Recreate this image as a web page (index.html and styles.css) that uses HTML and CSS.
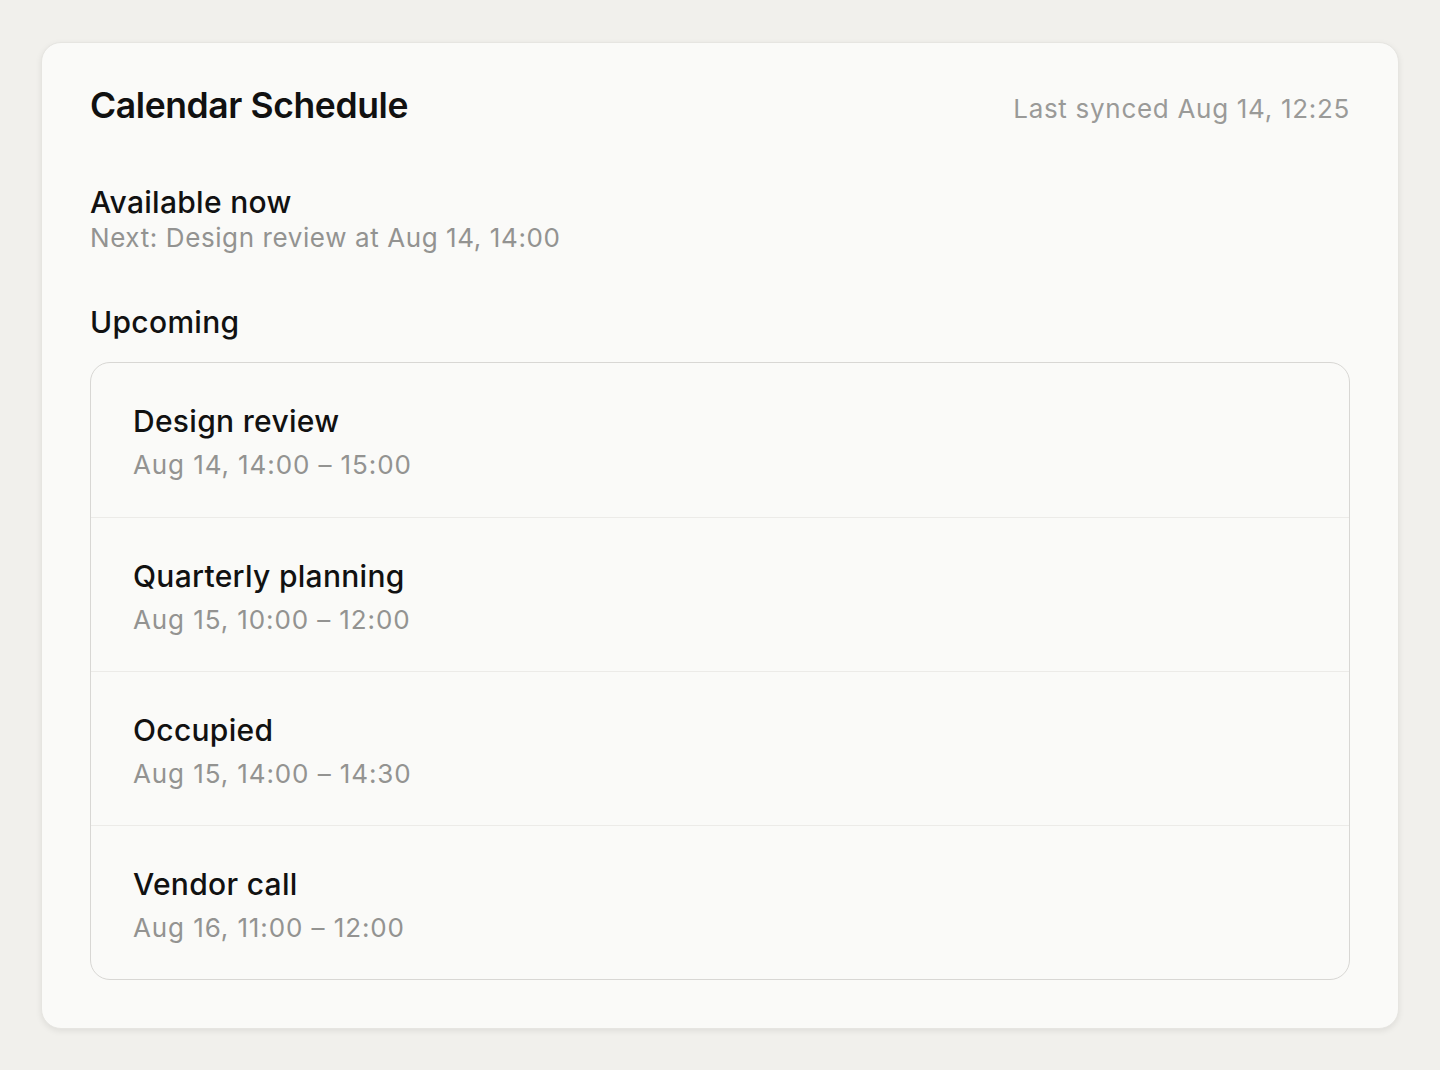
FILE: index.html
```html
<!DOCTYPE html>
<html lang="en">
  <head>
    <meta charset="UTF-8" />
    <title>Calendar Schedule</title>
    <link rel="stylesheet" href="styles.css">
  </head>
  <body>
    <main class="card">
      <header class="card-header">
        <h1>Calendar Schedule</h1>
        <span class="synced">Last synced Aug 14, 12:25</span>
      </header>

      <section class="status">
        <h2>Available now</h2>
        <p class="muted">Next: Design review at Aug 14, 14:00</p>
      </section>

      <section class="upcoming">
        <h2>Upcoming</h2>
        <ul class="events">
          <li class="event">
            <h3>Design review</h3>
            <p class="muted">Aug 14, 14:00 – 15:00</p>
          </li>
          <li class="event">
            <h3>Quarterly planning</h3>
            <p class="muted">Aug 15, 10:00 – 12:00</p>
          </li>
          <li class="event">
            <h3>Occupied</h3>
            <p class="muted">Aug 15, 14:00 – 14:30</p>
          </li>
          <li class="event">
            <h3>Vendor call</h3>
            <p class="muted">Aug 16, 11:00 – 12:00</p>
          </li>
        </ul>
      </section>
    </main>
  </body>
</html>
```

FILE: styles.css
```css
/* base */
* {
  box-sizing: border-box;
  margin: 0;
  padding: 0;
}
body {
  font-family: Inter, "Noto Sans", sans-serif;
  background: #f1f0ec;
  color: #111111;
  padding: 42px 41px;
  min-height: 100vh;
}
/* card */
.card {
  background: #fafaf8;
  border: 1px solid #e6e5e1;
  border-radius: 20px;
  box-shadow: 0 2px 6px rgba(0, 0, 0, 0.08);
  padding: 40px 48px 48px;
}
.card-header {
  display: flex;
  justify-content: space-between;
  align-items: baseline;
}
.card-header h1 {
  font-size: 35.5px;
  font-weight: 600;
  line-height: 1.3;
  letter-spacing: -0.4px;
}
.synced {
  font-size: 26px;
  letter-spacing: 0.7px;
  color: #9a9a98;
}
.muted {
  color: #939391;
}
/* status */
.status {
  margin-top: 54px;
}
.status h2,
.upcoming h2 {
  font-size: 30px;
  font-weight: 500;
  line-height: 1.3;
  letter-spacing: 0.3px;
}
.status p {
  font-size: 26px;
  line-height: 1.25;
  letter-spacing: 0.6px;
}
.upcoming {
  margin-top: 48px;
}
/* event list */
.events {
  list-style: none;
  margin-top: 20px;
  border: 1.5px solid #d8d7d4;
  border-radius: 20px;
}
.event {
  height: 154px;
  padding: 40px 42px 0;
  border-top: 1px solid #ecebe8;
}
.event:first-child {
  border-top: none;
}
.event h3 {
  font-size: 30px;
  font-weight: 500;
  line-height: 1.25;
  letter-spacing: 0.3px;
}
.event p {
  font-size: 26px;
  line-height: 1.3;
  margin-top: 8px;
  letter-spacing: 0.9px;
}
```
